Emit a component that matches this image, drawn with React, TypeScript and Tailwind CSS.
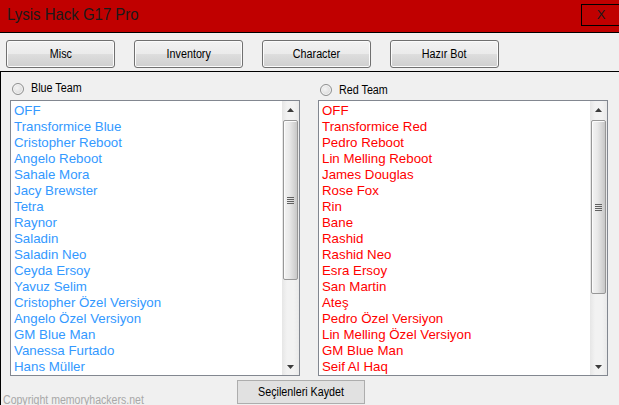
import React from "react";

const blue = [
  "OFF",
  "Transformice Blue",
  "Cristopher Reboot",
  "Angelo Reboot",
  "Sahale Mora",
  "Jacy Brewster",
  "Tetra",
  "Raynor",
  "Saladin",
  "Saladin Neo",
  "Ceyda Ersoy",
  "Yavuz Selim",
  "Cristopher Özel Versiyon",
  "Angelo Özel Versiyon",
  "GM Blue Man",
  "Vanessa Furtado",
  "Hans Müller",
];

const red = [
  "OFF",
  "Transformice Red",
  "Pedro Reboot",
  "Lin Melling Reboot",
  "James Douglas",
  "Rose Fox",
  "Rin",
  "Bane",
  "Rashid",
  "Rashid Neo",
  "Esra Ersoy",
  "San Martin",
  "Ateş",
  "Pedro Özel Versiyon",
  "Lin Melling Özel Versiyon",
  "GM Blue Man",
  "Seif Al Haq",
];

const font = { fontFamily: '"Liberation Sans", Arial, sans-serif' };

function Radio() {
  return (
    <div className="w-[12px] h-[12px] rounded-full border border-[#8e8f8f] bg-[radial-gradient(circle_at_40%_40%,#f4f4f4_0%,#dcdcdc_70%,#cfcfcf_100%)] shadow-[inset_0_0_0_1px_#f7f7f7]" />
  );
}

function Scrollbar({ thumbH }: { thumbH: string }) {
  return (
    <div className="w-[17px] h-full flex flex-col bg-[linear-gradient(to_right,#e6e6e6,#f2f2f2_30%,#f2f2f2_70%,#e9e9e9)]">
      <div className="h-[17px] flex items-center justify-center">
        <svg width="7" height="4" viewBox="0 0 7 4">
          <polygon points="3.5,0 7,4 0,4" fill="#3c3c3c" />
        </svg>
      </div>
      <div className="flex-1 flex flex-col pt-[2px]">
        <div
          className={`${thumbH} mx-px rounded-[2px] border border-[#979797] bg-[linear-gradient(to_right,#f3f3f3,#e9e9e9_40%,#d6d6d6_75%,#c7c7c7)] shadow-[inset_1px_1px_0_#fbfbfb] flex items-center justify-center`}
        >
          <div className="flex flex-col gap-px">
            <div className="w-[7px] h-px bg-[#606060]" />
            <div className="w-[7px] h-px bg-[#606060]" />
            <div className="w-[7px] h-px bg-[#606060]" />
            <div className="w-[7px] h-px bg-[#606060]" />
          </div>
        </div>
      </div>
      <div className="h-[17px] flex items-center justify-center">
        <svg width="7" height="4" viewBox="0 0 7 4">
          <polygon points="0,0 7,0 3.5,4" fill="#3c3c3c" />
        </svg>
      </div>
    </div>
  );
}

function ListBox({
  items,
  color,
  thumbH,
}: {
  items: string[];
  color: string;
  thumbH: string;
}) {
  return (
    <div className="w-[290px] h-[276px] border border-[#828790] bg-white flex">
      <div className="flex-1 overflow-hidden pl-[3px] pt-[2px]">
        {items.map((t, i) => (
          <div
            key={i}
            className={`h-[16px] leading-[16px] text-[13.3px] whitespace-nowrap ${color}`}
            style={font}
          >
            {t}
          </div>
        ))}
      </div>
      <Scrollbar thumbH={thumbH} />
    </div>
  );
}

function TopButton({ label }: { label: string }) {
  return (
    <div className="w-[109px] h-[28px] rounded-[3px] border border-[#707070] bg-[linear-gradient(to_bottom,#f2f2f2_0%,#ebebeb_48%,#dddddd_52%,#cfcfcf_100%)] shadow-[inset_0_0_0_1px_#fbfbfb] flex items-center justify-center">
      <span
        className="text-[12.5px] text-black inline-block scale-x-[0.86]"
        style={font}
      >
        {label}
      </span>
    </div>
  );
}

export default function App() {
  return (
    <div className="w-[619px] h-[405px] bg-[#f0f0f0] overflow-hidden flex flex-col">
      {/* title bar */}
      <div className="h-[33px] shrink-0 bg-[#c00000] border-b border-black flex items-start justify-between">
        <span
          className="ml-[7px] mt-[5px] text-[17px] leading-[20px] text-[#1a1a1a] inline-block origin-left scale-x-[0.88]"
          style={font}
        >
          Lysis Hack G17 Pro
        </span>
        <div className="mt-[4px] -mr-[2px] w-[40px] h-[22px] border border-black flex items-center justify-center">
          <span className="text-[13px] text-[#1a1a1a] font-light" style={font}>
            X
          </span>
        </div>
      </div>

      {/* button row */}
      <div className="h-[38px] shrink-0 flex gap-[19px] pl-[6px] pt-[7px]">
        <TopButton label="Misc" />
        <TopButton label="Inventory" />
        <TopButton label="Character" />
        <TopButton label="Hazır Bot" />
      </div>

      {/* panel */}
      <div className="flex-1 border-t border-l border-black flex flex-col">
        <div className="flex">
          <div className="ml-[9px] flex flex-col">
            <div className="h-[28px] flex items-center gap-[7px] pl-[2px] pt-[5px]">
              <Radio />
              <span
                className="text-[12.5px] text-black inline-block origin-left scale-x-[0.86]"
                style={font}
              >
                Blue Team
              </span>
            </div>
            <ListBox items={blue} color="text-[#3399ff]" thumbH="h-[160px]" />
          </div>
          <div className="ml-[18px] flex flex-col">
            <div className="h-[28px] flex items-center gap-[7px] pl-[2px] pt-[8px]">
              <Radio />
              <span
                className="text-[12.5px] text-black inline-block origin-left scale-x-[0.86]"
                style={font}
              >
                Red Team
              </span>
            </div>
            <ListBox items={red} color="text-[#ff0000]" thumbH="h-[174px]" />
          </div>
        </div>

        {/* bottom row */}
        <div className="flex items-start mt-[4px]">
          <div className="w-[236px] pl-[2px] pt-[6px]">
            <span
              className="text-[12px] leading-[14px] text-[#a8a8a8] inline-block origin-left scale-x-[0.88] whitespace-nowrap"
              style={font}
            >
              Copyright memoryhackers.net
            </span>
          </div>
          <div className="w-[128px] h-[24px] border border-[#adadad] bg-[#e1e1e1] flex items-center justify-center">
            <span
              className="text-[12.5px] text-black inline-block scale-x-[0.86] whitespace-nowrap"
              style={font}
            >
              Seçilenleri Kaydet
            </span>
          </div>
        </div>
      </div>
    </div>
  );
}
